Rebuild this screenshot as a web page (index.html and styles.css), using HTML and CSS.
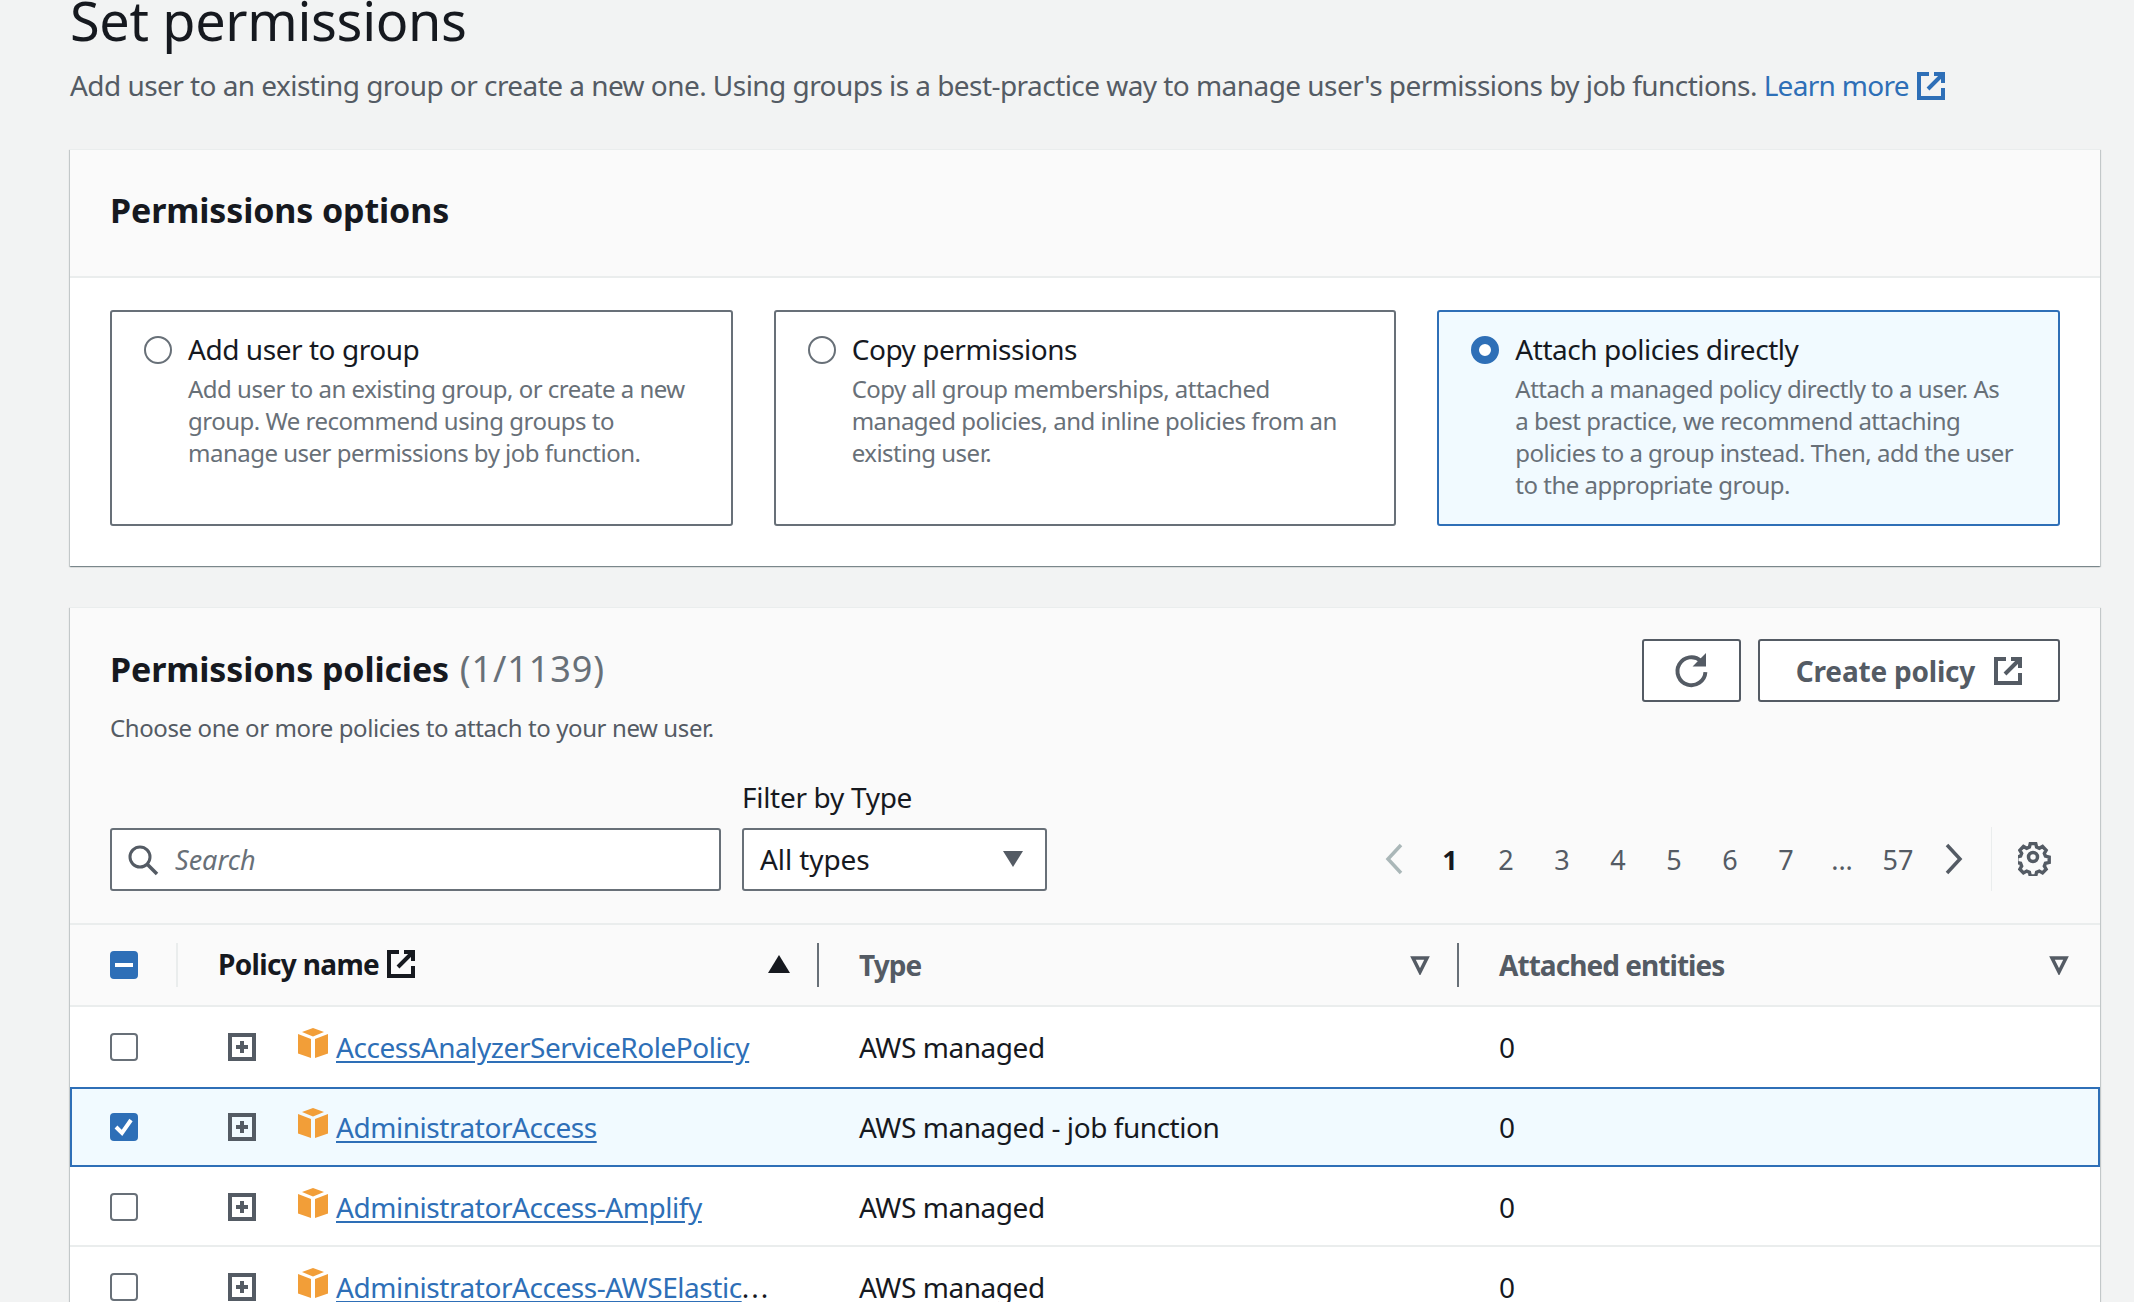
FILE: index.html
```html
<!DOCTYPE html>
<html lang="en">
<head>
  <meta charset="UTF-8">
  <title>Set permissions</title>
  <link rel="stylesheet" href="styles.css">
</head>
<body>
  <svg class="sprites" width="0" height="0">
    <symbol id="ext" viewBox="0 0 28 28"><path d="M12 2H2v24h24V16M17 2h9v9M26 2 11 17" fill="none" stroke="currentColor" stroke-width="4"/></symbol>
    <symbol id="cube" viewBox="0 0 30 30"><path d="M15 0l11 4-11 4.500L4 4zM0 6l13 5v19L0 25.500zM30 6l-13 5v19l13-4.500z" fill="#f29e38"/></symbol>
    <symbol id="plus" viewBox="0 0 28 28"><path d="M2 2h24v24H2z" fill="none" stroke="#545b64" stroke-width="4"/><path d="M14 8v12M8 14h12" fill="none" stroke="#545b64" stroke-width="4"/></symbol>
    <symbol id="filter" viewBox="0 0 20 20"><path d="M3 3h14l-7 14z" fill="none" stroke="#545b64" stroke-width="3.500"/></symbol>
  </svg>

  <h1 class="page-title">Set permissions</h1>
  <p class="page-desc">Add user to an existing group or create a new one. Using groups is a best-practice way to manage user's permissions by job functions. <a href="#" class="learn">Learn more</a> <svg class="ext-icon learn-icon"><use href="#ext"/></svg></p>

  <section class="card options-card">
    <div class="card-head"><h2>Permissions options</h2></div>
    <div class="options">
      <div class="option">
        <span class="radio"></span>
        <div>
          <div class="option-title">Add user to group</div>
          <div class="option-desc">Add user to an existing group, or create a new group. We recommend using groups to manage user permissions by job function.</div>
        </div>
      </div>
      <div class="option">
        <span class="radio"></span>
        <div>
          <div class="option-title">Copy permissions</div>
          <div class="option-desc">Copy all group memberships, attached managed policies, and inline policies from an existing user.</div>
        </div>
      </div>
      <div class="option selected">
        <span class="radio on"></span>
        <div>
          <div class="option-title">Attach policies directly</div>
          <div class="option-desc">Attach a managed policy directly to a user. As<br>a best practice, we recommend attaching policies to a group instead. Then, add the user to the appropriate group.</div>
        </div>
      </div>
    </div>
  </section>

  <section class="card policies-card">
    <div class="policies-top">
      <div class="policies-head">
        <div>
          <h2>Permissions policies <span class="count">(1/1139)</span></h2>
          <p class="policies-desc">Choose one or more policies to attach to your new user.</p>
        </div>
        <div class="actions">
          <button class="btn btn-icon">
            <svg width="38" height="38" viewBox="0 0 34 34"><path d="M29 18a12.500 12.500 0 1 1-4-10" fill="none" stroke="currentColor" stroke-width="3.500"/><path d="M29.500 1v12h-12z" fill="currentColor"/></svg>
          </button>
          <button class="btn btn-create">Create policy <svg class="ext-icon"><use href="#ext"/></svg></button>
        </div>
      </div>

      <div class="filters">
        <div class="search">
          <svg width="32" height="32" viewBox="0 0 32 32"><circle cx="13" cy="13" r="10" fill="none" stroke="#545b64" stroke-width="3"/><path d="M20 20l10 10" stroke="#545b64" stroke-width="3.500"/></svg>
          <span>Search</span>
        </div>
        <div class="filter-type">
          <label class="filter-label">Filter by Type</label>
          <div class="select">All types <span class="caret"></span></div>
        </div>
        <div class="pager">
          <svg class="chev" width="20" height="32" viewBox="0 0 20 32"><path d="M17 2 4 16l13 14" fill="none" stroke="#aab7b8" stroke-width="3.500"/></svg>
          <span class="page current">1</span>
          <span class="page">2</span>
          <span class="page">3</span>
          <span class="page">4</span>
          <span class="page">5</span>
          <span class="page">6</span>
          <span class="page">7</span>
          <span class="page">...</span>
          <span class="page">57</span>
          <svg class="chev" width="20" height="32" viewBox="0 0 20 32"><path d="M3 2l13 14L3 30" fill="none" stroke="#545b64" stroke-width="3.500"/></svg>
          <div class="gear-wrap">
            <svg width="34" height="34" viewBox="0 0 34 34"><path d="M14 2h6l1 4 3 1.300 3.600-2 4 4.200-2 3.500 1.200 3 4.200 1v6l-4.200 1-1.200 3 2 3.500-4 4.200-3.600-2-3 1.300-1 4h-6l-1-4-3-1.300-3.600 2-4-4.200 2-3.500-1.200-3-4.200-1v-6l4.200-1 1.200-3-2-3.500 4-4.200 3.600 2 3-1.300z" transform="translate(-.3 -.3) scale(.9)" fill="none" stroke="#545b64" stroke-width="3.800"/><circle cx="15" cy="15" r="4.500" fill="none" stroke="#545b64" stroke-width="3.500"/></svg>
          </div>
        </div>
      </div>
    </div>

    <div class="tbl-head">
      <div class="th th-check"><span class="check mixed"></span></div>
      <div class="th th-name">Policy name <svg class="ext-icon"><use href="#ext"/></svg><span class="sort-up"></span></div>
      <div class="th th-col">Type <svg class="filter-icon"><use href="#filter"/></svg></div>
      <div class="th th-col th-last">Attached entities <svg class="filter-icon"><use href="#filter"/></svg></div>
    </div>

    <div class="row">
      <div class="td-check"><span class="check"></span></div>
      <div class="td-name"><svg class="plus"><use href="#plus"/></svg><svg class="cube"><use href="#cube"/></svg><a href="#">AccessAnalyzerServiceRolePolicy</a></div>
      <div class="td">AWS managed</div>
      <div class="td">0</div>
    </div>
    <div class="row row-selected">
      <div class="td-check"><span class="check checked"><svg width="28" height="28" viewBox="0 0 28 28"><path d="M6 14l6 6 9-13" fill="none" stroke="#fff" stroke-width="4"/></svg></span></div>
      <div class="td-name"><svg class="plus"><use href="#plus"/></svg><svg class="cube"><use href="#cube"/></svg><a href="#">AdministratorAccess</a></div>
      <div class="td">AWS managed - job function</div>
      <div class="td">0</div>
    </div>
    <div class="row">
      <div class="td-check"><span class="check"></span></div>
      <div class="td-name"><svg class="plus"><use href="#plus"/></svg><svg class="cube"><use href="#cube"/></svg><a href="#">AdministratorAccess-Amplify</a></div>
      <div class="td">AWS managed</div>
      <div class="td">0</div>
    </div>
    <div class="row">
      <div class="td-check"><span class="check"></span></div>
      <div class="td-name"><svg class="plus"><use href="#plus"/></svg><svg class="cube"><use href="#cube"/></svg><a href="#" class="clip">AdministratorAccess-AWSElastic</a><span class="more">...</span></div>
      <div class="td">AWS managed</div>
      <div class="td">0</div>
    </div>
  </section>
</body>
</html>
```

FILE: styles.css
```css
html, body {
  height: 100%;
  overflow: hidden;
}

body {
  margin: 0;
  padding: 0 34px 0 70px;
  background-color: #f2f3f3;
  color: #16191f;
  font-family: "Noto Sans", "Open Sans", sans-serif;
  font-size: 28px;
}

.sprites {
  position: absolute;
}

.page-title {
  margin: -10px 0 0;
  font-size: 54px;
  line-height: 60px;
  font-weight: 400;
  letter-spacing: -0.33px;
}

.page-desc {
  margin: 15px 0 0;
  font-size: 28px;
  line-height: 40px;
  color: #545b64;
  letter-spacing: -0.55px;
}

.learn {
  color: #2e6fb7;
  text-decoration: none;
  letter-spacing: -0.7px;
}

.ext-icon {
  width: 28px;
  height: 28px;
}

.learn-icon {
  color: #2e6fb7;
  vertical-align: -4px;
  margin-left: 1px;
}

.card {
  background-color: #fff;
  box-shadow: 0 1px 1px 0 rgba(0, 28, 36, 0.3), 1px 1px 1px 0 rgba(0, 28, 36, 0.15), -1px 1px 1px 0 rgba(0, 28, 36, 0.15);
  border-top: 1px solid #eaeded;
}

.options-card {
  margin-top: 44px;
  height: 417px;
  box-sizing: border-box;
}

.card-head {
  height: 126px;
  background-color: #fafafa;
  border-bottom: 2px solid #eaeded;
  display: flex;
  align-items: center;
  padding: 0 40px;
  box-sizing: content-box;
}

.card-head h2 {
  margin-top: -7px;
}

h2 {
  margin: 0;
  font-size: 34px;
  line-height: 44px;
  font-weight: 700;
  letter-spacing: -0.13px;
}

.options {
  display: grid;
  grid-template-columns: repeat(3, 1fr);
  gap: 41px;
  padding: 32px 40px 0;
}

.option {
  display: flex;
  gap: 16px;
  height: 216px;
  box-sizing: border-box;
  padding: 19px 40px 0 32px;
  border: 2px solid #687078;
  border-radius: 3px;
}

.option.selected {
  background-color: #f1faff;
  border-color: #2e6fb7;
}

.radio {
  flex: none;
  width: 28px;
  height: 28px;
  margin-top: 5px;
  box-sizing: border-box;
  border: 2px solid #687078;
  border-radius: 50%;
  background-color: #fff;
}

.radio.on {
  border: 8px solid #2e6fb7;
}

.option-title {
  font-size: 28px;
  line-height: 36px;
  letter-spacing: -0.45px;
}

.option-desc {
  margin-top: 6px;
  font-size: 24px;
  line-height: 32px;
  color: #687078;
  letter-spacing: -0.5px;
}

.policies-card {
  margin-top: 41px;
}

.policies-top {
  background-color: #fafafa;
  height: 315px;
  padding: 0 40px;
  border-bottom: 2px solid #eaeded;
  box-sizing: content-box;
}

.policies-head {
  display: flex;
  justify-content: space-between;
  padding-top: 31px;
}

.policies-head h2 {
  margin-top: 8px;
}

.count {
  margin-left: 2px;
  font-weight: 400;
  font-size: 36px;
  letter-spacing: 0.9px;
  color: #687078;
}

.policies-desc {
  margin: 21px 0 0;
  font-size: 24px;
  line-height: 32px;
  color: #545b64;
  letter-spacing: -0.4px;
}

.actions {
  display: flex;
  gap: 17px;
}

.btn {
  height: 63px;
  box-sizing: border-box;
  border: 2px solid #545b64;
  border-radius: 3px;
  background-color: #fff;
  color: #545b64;
  font-family: inherit;
  font-size: 28px;
  font-weight: 700;
  display: flex;
  align-items: center;
  justify-content: center;
  letter-spacing: -0.2px;
}

.btn-icon {
  width: 99px;
}

.btn-create {
  width: 302px;
  gap: 19px;
}

.filters {
  display: flex;
  align-items: flex-end;
  margin-top: 35px;
  margin-right: -41px;
  margin-left: 0;
}

.search {
  width: 611px;
  height: 63px;
  box-sizing: border-box;
  border: 2px solid #687078;
  border-radius: 3px;
  background-color: #fff;
  display: flex;
  align-items: center;
  gap: 16px;
  padding-left: 15px;
  font-style: italic;
  font-size: 27px;
  color: #687078;
}

.filter-type {
  margin-left: 21px;
}

.filter-label {
  display: block;
  font-size: 28px;
  line-height: 36px;
  margin-bottom: 13px;
  letter-spacing: -0.3px;
}

.select {
  position: relative;
  width: 305px;
  height: 63px;
  box-sizing: border-box;
  border: 2px solid #687078;
  border-radius: 3px;
  background-color: #fff;
  padding-left: 16px;
  line-height: 59px;
  font-size: 28px;
  letter-spacing: -0.1px;
}

.caret {
  position: absolute;
  right: 22px;
  top: 21px;
  border-left: 10px solid transparent;
  border-right: 10px solid transparent;
  border-top: 16px solid #545b64;
}

.pager {
  display: flex;
  align-items: center;
  height: 64px;
  margin-left: 337px;
  color: #545b64;
  font-size: 27px;
}

.chev {
  flex: none;
}

.page {
  width: 56px;
  text-align: center;
}

.pager .chev:first-child {
  margin-right: 18px;
}

.pager .page + .chev {
  margin-left: 18px;
}

.page.current {
  color: #16191f;
  font-weight: 700;
}

.gear-wrap {
  height: 64px;
  margin-left: 27px;
  padding-left: 26px;
  border-left: 1px solid #eaeded;
  display: flex;
  align-items: center;
}

.tbl-head, .row {
  display: grid;
  grid-template-columns: 108px 641px 640px 641px;
  align-items: center;
}

.tbl-head {
  height: 80px;
  background-color: #fafafa;
  border-bottom: 2px solid #eaeded;
  font-size: 28px;
  font-weight: 700;
  letter-spacing: -0.65px;
}

.th {
  height: 44px;
  box-sizing: border-box;
  display: flex;
  align-items: center;
}

.th-check {
  padding-left: 40px;
  border-right: 2px solid #eaeded;
}

.th-name {
  padding-left: 40px;
  gap: 8px;
  padding-right: 27px;
  padding-bottom: 2px;
  border-right: 2px solid #687078;
}

.th-col {
  padding: 0 27px 0 40px;
  justify-content: space-between;
  color: #545b64;
  border-right: 2px solid #687078;
  letter-spacing: -0.95px;
}

.th-last {
  border-right: none;
  padding-right: 31px;
}

.sort-up {
  margin-left: auto;
  border-left: 11px solid transparent;
  border-right: 11px solid transparent;
  border-bottom: 18px solid #16191f;
}

.filter-icon {
  width: 20px;
  height: 20px;
}

.check {
  display: block;
  width: 28px;
  height: 28px;
  box-sizing: border-box;
  border: 2px solid #687078;
  border-radius: 4px;
  background-color: #fff;
}

.check.mixed {
  border-color: #2e6fb7;
  background: linear-gradient(#fff, #fff) center / 18px 4px no-repeat #2e6fb7;
}

.check.checked {
  border: none;
  background-color: #2e6fb7;
}

.check svg {
  display: block;
}

.row {
  height: 76px;
  padding-top: 2px;
  border-bottom: 2px solid #eaeded;
  background-color: #fff;
  font-size: 28px;
  letter-spacing: -0.45px;
}

.row-selected {
  height: 80px;
  padding-top: 0;
  border: 2px solid #2e6fb7;
  box-sizing: border-box;
  background-color: #f1faff;
  grid-template-columns: 106px 641px 640px 639px;
}

.row:has(+ .row-selected) {
  border-bottom-color: transparent;
}

.td-check {
  padding-left: 40px;
}

.row-selected .td-check {
  padding-left: 38px;
}

.td-name {
  display: flex;
  align-items: center;
  padding-left: 50px;
}

.plus {
  flex: none;
  width: 28px;
  height: 28px;
}

.cube {
  flex: none;
  width: 30px;
  height: 30px;
  margin: -8px 8px 0 42px;
}

.td-name a {
  color: #2e6fb7;
  text-underline-offset: 3px;
}

.more {
  color: #16191f;
  letter-spacing: 2px;
}

.td {
  padding-left: 40px;
}
```
